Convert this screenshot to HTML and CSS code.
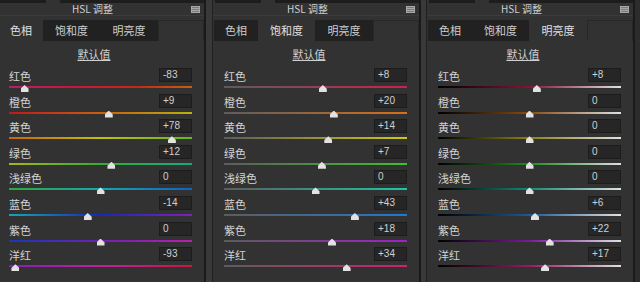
FILE: index.html
```html
<!DOCTYPE html>
<html lang="zh-CN">
<head>
<meta charset="UTF-8" />
<meta name="viewport" content="width=device-width, initial-scale=1" />
<title>HSL 调整</title>
<link rel="stylesheet" href="styles.css">
</head>
<body>
<div class="screen">

  <!-- 色相 -->
  <section class="panel hue first">
    <div class="cap"><span class="cap-a"></span><span class="cap-b"></span></div>
    <header class="head">
      <span class="title">HSL 调整</span>
      <svg class="menu" width="9" height="7" viewBox="0 0 9 7"><rect width="9" height="7" fill="#a8a8a8"/><path d="M1 1.5h7M1 3.5h7M1 5.5h7" stroke="#7a7a7a" stroke-width="1"/></svg>
    </header>
    <nav class="tabs">
      <span class="tab tab-hue active">色相</span>
      <span class="tab tab-sat">饱和度</span>
      <span class="tab tab-lum">明亮度</span>
      <span class="tab-fill"></span>
    </nav>
    <div class="defaults"><span>默认值</span></div>
    <div class="row red"><div class="row-head"><span class="label">红色</span><span class="value">-83</span></div><div class="track"><i class="thumb" style="left:8.5%"></i></div></div>
    <div class="row orange"><div class="row-head"><span class="label">橙色</span><span class="value">+9</span></div><div class="track"><i class="thumb" style="left:54.5%"></i></div></div>
    <div class="row yellow"><div class="row-head"><span class="label">黄色</span><span class="value">+78</span></div><div class="track"><i class="thumb" style="left:89%"></i></div></div>
    <div class="row green"><div class="row-head"><span class="label">绿色</span><span class="value">+12</span></div><div class="track"><i class="thumb" style="left:56%"></i></div></div>
    <div class="row aqua"><div class="row-head"><span class="label">浅绿色</span><span class="value">0</span></div><div class="track"><i class="thumb" style="left:50%"></i></div></div>
    <div class="row blue"><div class="row-head"><span class="label">蓝色</span><span class="value">-14</span></div><div class="track"><i class="thumb" style="left:43%"></i></div></div>
    <div class="row purple"><div class="row-head"><span class="label">紫色</span><span class="value">0</span></div><div class="track"><i class="thumb" style="left:50%"></i></div></div>
    <div class="row magenta"><div class="row-head"><span class="label">洋红</span><span class="value">-93</span></div><div class="track"><i class="thumb" style="left:3.5%"></i></div></div>
  </section>

  <div class="divider"></div>

  <!-- 饱和度 -->
  <section class="panel sat">
    <div class="cap"><span class="cap-a"></span><span class="cap-b"></span></div>
    <header class="head">
      <span class="title">HSL 调整</span>
      <svg class="menu" width="9" height="7" viewBox="0 0 9 7"><rect width="9" height="7" fill="#a8a8a8"/><path d="M1 1.5h7M1 3.5h7M1 5.5h7" stroke="#7a7a7a" stroke-width="1"/></svg>
    </header>
    <nav class="tabs">
      <span class="tab tab-hue">色相</span>
      <span class="tab tab-sat active">饱和度</span>
      <span class="tab tab-lum">明亮度</span>
      <span class="tab-fill"></span>
    </nav>
    <div class="defaults"><span>默认值</span></div>
    <div class="row red"><div class="row-head"><span class="label">红色</span><span class="value">+8</span></div><div class="track"><i class="thumb" style="left:54%"></i></div></div>
    <div class="row orange"><div class="row-head"><span class="label">橙色</span><span class="value">+20</span></div><div class="track"><i class="thumb" style="left:60%"></i></div></div>
    <div class="row yellow"><div class="row-head"><span class="label">黄色</span><span class="value">+14</span></div><div class="track"><i class="thumb" style="left:57%"></i></div></div>
    <div class="row green"><div class="row-head"><span class="label">绿色</span><span class="value">+7</span></div><div class="track"><i class="thumb" style="left:53.5%"></i></div></div>
    <div class="row aqua"><div class="row-head"><span class="label">浅绿色</span><span class="value">0</span></div><div class="track"><i class="thumb" style="left:50%"></i></div></div>
    <div class="row blue"><div class="row-head"><span class="label">蓝色</span><span class="value">+43</span></div><div class="track"><i class="thumb" style="left:71.5%"></i></div></div>
    <div class="row purple"><div class="row-head"><span class="label">紫色</span><span class="value">+18</span></div><div class="track"><i class="thumb" style="left:59%"></i></div></div>
    <div class="row magenta"><div class="row-head"><span class="label">洋红</span><span class="value">+34</span></div><div class="track"><i class="thumb" style="left:67%"></i></div></div>
  </section>

  <div class="divider narrow"></div>

  <!-- 明亮度 -->
  <section class="panel lum">
    <div class="cap"><span class="cap-a"></span><span class="cap-b"></span></div>
    <header class="head">
      <span class="title">HSL 调整</span>
      <svg class="menu" width="9" height="7" viewBox="0 0 9 7"><rect width="9" height="7" fill="#a8a8a8"/><path d="M1 1.5h7M1 3.5h7M1 5.5h7" stroke="#7a7a7a" stroke-width="1"/></svg>
    </header>
    <nav class="tabs">
      <span class="tab tab-hue">色相</span>
      <span class="tab tab-sat">饱和度</span>
      <span class="tab tab-lum active">明亮度</span>
      <span class="tab-fill"></span>
    </nav>
    <div class="defaults"><span>默认值</span></div>
    <div class="row red"><div class="row-head"><span class="label">红色</span><span class="value">+8</span></div><div class="track"><i class="thumb" style="left:54%"></i></div></div>
    <div class="row orange"><div class="row-head"><span class="label">橙色</span><span class="value">0</span></div><div class="track"><i class="thumb" style="left:50%"></i></div></div>
    <div class="row yellow"><div class="row-head"><span class="label">黄色</span><span class="value">0</span></div><div class="track"><i class="thumb" style="left:50%"></i></div></div>
    <div class="row green"><div class="row-head"><span class="label">绿色</span><span class="value">0</span></div><div class="track"><i class="thumb" style="left:50%"></i></div></div>
    <div class="row aqua"><div class="row-head"><span class="label">浅绿色</span><span class="value">0</span></div><div class="track"><i class="thumb" style="left:50%"></i></div></div>
    <div class="row blue"><div class="row-head"><span class="label">蓝色</span><span class="value">+6</span></div><div class="track"><i class="thumb" style="left:53%"></i></div></div>
    <div class="row purple"><div class="row-head"><span class="label">紫色</span><span class="value">+22</span></div><div class="track"><i class="thumb" style="left:61%"></i></div></div>
    <div class="row magenta"><div class="row-head"><span class="label">洋红</span><span class="value">+17</span></div><div class="track"><i class="thumb" style="left:58.5%"></i></div></div>
  </section>

  <div class="edge"></div>
</div>
</body>
</html>
```
FILE: styles.css
```css
body {
  margin: 0;
  background: #1e1e1e;
  font-family: "Noto Sans CJK SC", "Liberation Sans", sans-serif;
  overflow: hidden;
}
.screen {
  display: flex;
  width: 640px;
  height: 282px;
  overflow: hidden;
}
.panel {
  flex: none;
  width: 206px;
  height: 282px;
  background: #323232;
  display: flex;
  flex-direction: column;
}
.panel.first {
  margin-left: -2px;
}
.divider {
  flex: none;
  width: 6px;
  background: #393939;
  border-left: 2px solid #1a1a1a;
  border-right: 1px solid #202020;
}
.divider.narrow {
  width: 5px;
}
.edge {
  flex: 1;
  background: #2c2c2c;
  border-left: 2px solid #1a1a1a;
}

/* top strip, bottom of the panel above */
.cap {
  display: flex;
  height: 3px;
  gap: 14px;
  padding-left: 2px;
}
.cap-a {
  width: 46px;
  background: #1d1d1d;
}
.cap-b {
  flex: 1;
  background: #1d1d1d;
}

.head {
  display: flex;
  align-items: center;
  height: 12px;
  border-bottom: 1px solid #3b3b3b;
}
.title {
  flex: 1;
  text-align: center;
  padding-left: 4px;
  font-size: 10px;
  line-height: 12px;
  color: #cfcfcf;
}
.menu {
  display: block;
  margin: 0 4px 0 8px;
}

.tabs {
  display: flex;
  height: 21px;
  margin-top: 4px;
  padding-left: 1px;
}
.tab {
  flex: none;
  background: #212121;
  color: #cdcdcd;
  font-size: 11px;
  line-height: 21px;
  text-align: center;
}
.tab.active {
  background: #323232;
  color: #e0e0e0;
}
.tab-hue { width: 44px; }
.tab-sat { width: 57px; }
.tab-lum { width: 58px; }
.tab-fill {
  flex: 1;
  border: 1px solid #272727;
  border-bottom: none;
}

.defaults {
  margin-top: 7px;
  height: 17px;
  padding-right: 14px;
  text-align: center;
  font-size: 11px;
  line-height: 13px;
  color: #cfcfcf;
}
.defaults span {
  text-decoration: underline;
  text-underline-offset: 1px;
}

.row {
  height: 25.6px;
  padding: 0 12px 0 11px;
}
.row-head {
  display: flex;
  justify-content: space-between;
  align-items: flex-end;
  padding-top: 3px;
}
.label {
  font-size: 11px;
  line-height: 12px;
  color: #d4d4d4;
}
.value {
  width: 33px;
  height: 14px;
  box-sizing: border-box;
  padding-left: 3px;
  background: #262626;
  border: 1px solid #1c1c1c;
  font-family: "Liberation Sans", sans-serif;
  font-size: 10px;
  line-height: 12px;
  color: #cfcfcf;
}
.track {
  position: relative;
  height: 2px;
  margin-top: 4px;
}
.thumb {
  position: absolute;
  top: -1px;
  width: 8px;
  height: 7px;
  margin-left: -4px;
  background: #e2e2e2;
  clip-path: polygon(50% 0, 100% 55%, 100% 100%, 0 100%, 0 55%);
}

/* hue */
.hue .red .track { background: linear-gradient(90deg, #b3206b, #c8163c 35%, #c42a12 70%, #c4600f); }
.hue .orange .track { background: linear-gradient(90deg, #c4161c, #c86010 50%, #b8b00e); }
.hue .yellow .track { background: linear-gradient(90deg, #c8640e, #c2c00c 50%, #64b420); }
.hue .green .track { background: linear-gradient(90deg, #a8b41c, #30b030 50%, #14a884); }
.hue .aqua .track { background: linear-gradient(90deg, #30a838, #12a8b0 50%, #1460c0); }
.hue .blue .track { background: linear-gradient(90deg, #12a8b0, #1828b8 50%, #8020b8); }
.hue .purple .track { background: linear-gradient(90deg, #1838b8, #7020b8 50%, #b820a8); }
.hue .magenta .track { background: linear-gradient(90deg, #8020b8, #c020a0 50%, #c81840); }

/* saturation */
.sat .red .track { background: linear-gradient(90deg, #5c5c5c, #d01e4e); }
.sat .orange .track { background: linear-gradient(90deg, #5c5c5c, #d87018); }
.sat .yellow .track { background: linear-gradient(90deg, #5c5c5c, #d0c810); }
.sat .green .track { background: linear-gradient(90deg, #5c5c5c, #40c030); }
.sat .aqua .track { background: linear-gradient(90deg, #5c5c5c, #18c8a8); }
.sat .blue .track { background: linear-gradient(90deg, #5c5c5c, #2078d0); }
.sat .purple .track { background: linear-gradient(90deg, #5c5c5c, #a020c8); }
.sat .magenta .track { background: linear-gradient(90deg, #5c5c5c, #d02070); }

/* lightness */
.lum .red .track { background: linear-gradient(90deg, #000, #8a1232 50%, #e0e0e0); }
.lum .orange .track { background: linear-gradient(90deg, #000, #8a4a10 50%, #e0e0e0); }
.lum .yellow .track { background: linear-gradient(90deg, #000, #8a8410 50%, #e0e0e0); }
.lum .green .track { background: linear-gradient(90deg, #000, #208a20 50%, #e0e0e0); }
.lum .aqua .track { background: linear-gradient(90deg, #000, #108a78 50%, #e0e0e0); }
.lum .blue .track { background: linear-gradient(90deg, #000, #1a5a9a 50%, #e0e0e0); }
.lum .purple .track { background: linear-gradient(90deg, #000, #7a1a9a 50%, #e0e0e0); }
.lum .magenta .track { background: linear-gradient(90deg, #000, #9a1a60 50%, #e0e0e0); }
```
